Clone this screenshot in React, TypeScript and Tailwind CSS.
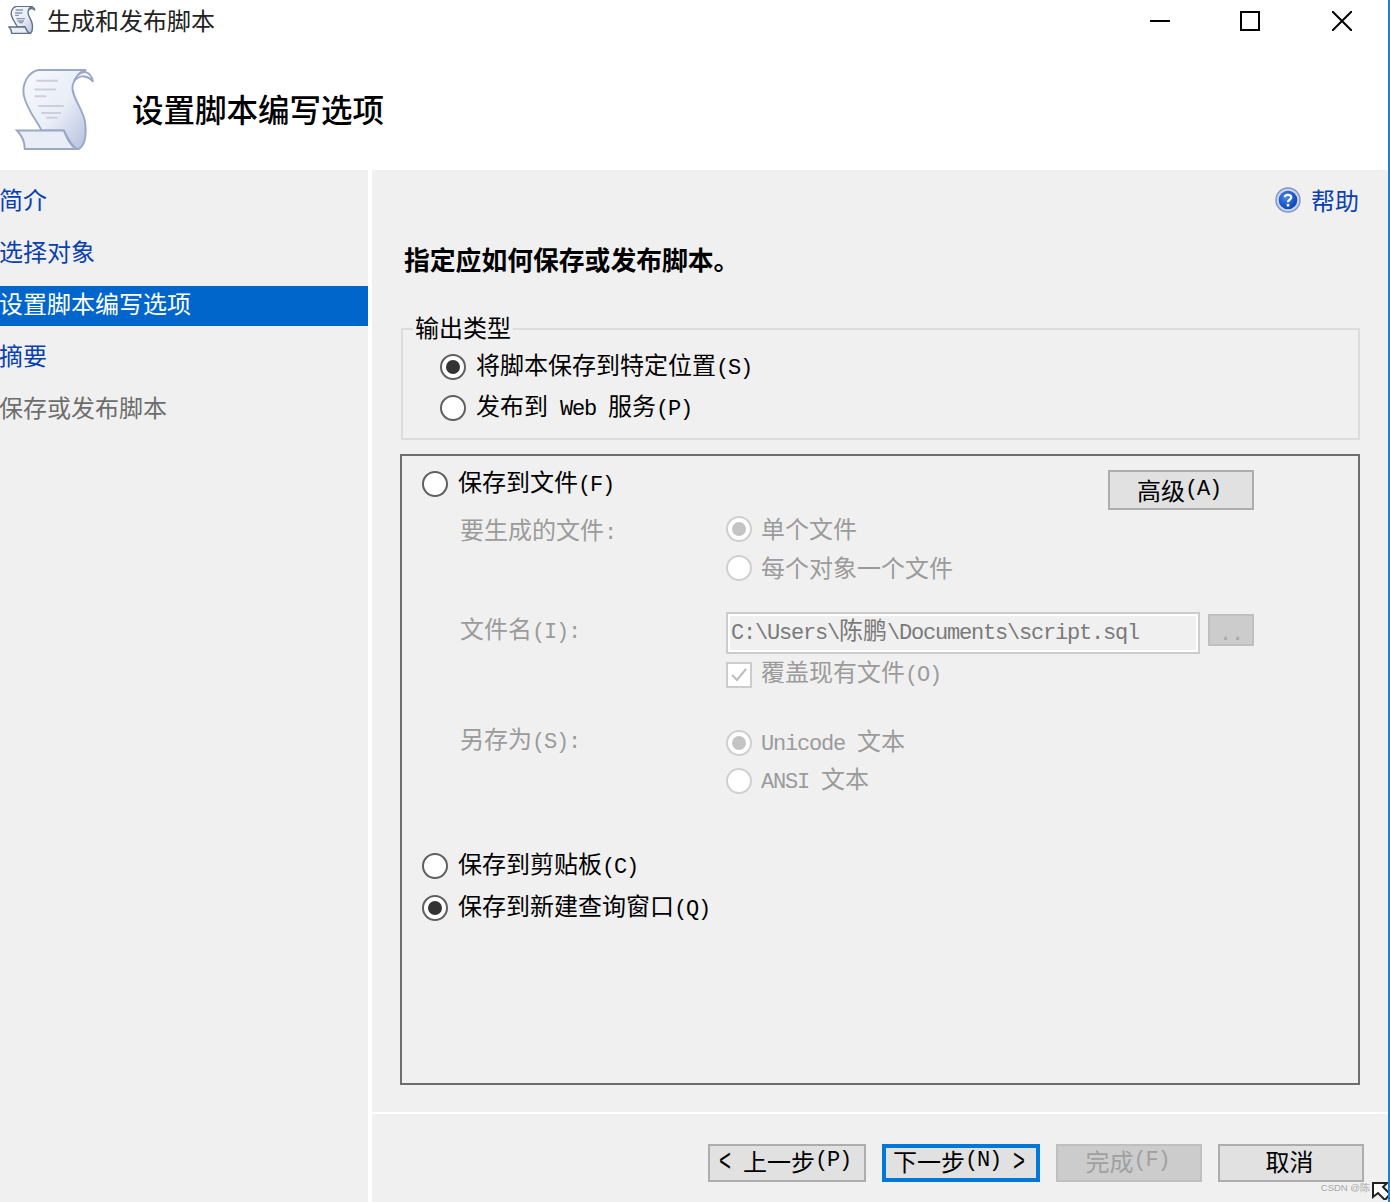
import type { ReactNode } from "react";

const CJK = "font-['Noto_Sans_CJK_SC','Liberation_Sans',sans-serif]";

// half-width latin: squeezed to the 12px cell that the 24px CJK text leaves for it
function M({ children }: { children: ReactNode }) {
  return <span className="font-['Liberation_Mono',monospace] text-[22px] tracking-[-1.2px] whitespace-pre">{children}</span>;
}

// the wizard's < and > are tall and narrow
function Chevron({ children }: { children: ReactNode }) {
  return <span className="relative top-[2px] inline-block w-[12px] scale-y-[1.6] text-center font-['Liberation_Mono',monospace] text-[20px]">{children}</span>;
}

function Radio({ checked, disabled }: { checked?: boolean; disabled?: boolean }) {
  return (
    <span
      className={`flex h-[26px] w-[26px] shrink-0 items-center justify-center rounded-full border-2 ${
        disabled ? "border-[#cfcfcf] bg-white" : "border-[#5f5f5f] bg-white"
      }`}
    >
      {checked && <span className={`h-[14px] w-[14px] rounded-full ${disabled ? "bg-[#c4c4c4]" : "bg-[#333333]"}`} />}
    </span>
  );
}

function Option({ checked, disabled, children, className = "" }: { checked?: boolean; disabled?: boolean; children: ReactNode; className?: string }) {
  return (
    <div className={`flex h-[36px] items-center ${disabled ? "gap-[9px] text-[#9b9b9b]" : "gap-[10px] text-black"} ${className}`}>
      <Radio checked={checked} disabled={disabled} />
      <span className="relative top-[-1px] leading-[36px] whitespace-pre">{children}</span>
    </div>
  );
}

function ScrollIcon({ size, small }: { size: number; small?: boolean }) {
  const line = small ? "#5f6f88" : "#9aa8c6";
  const sw = small ? 4 : 2;
  return (
    <svg width={size} height={size} viewBox="0 0 80 84" fill="none">
      <defs>
        <linearGradient id={`paper${size}`} x1="0" y1="0" x2="1" y2="1">
          <stop offset="0" stopColor="#f7f9fd" />
          <stop offset="0.55" stopColor="#e9edf6" />
          <stop offset="1" stopColor="#b4bfdd" />
        </linearGradient>
      </defs>
      <path d="M62 7 C68 1 76 1 79 13 C74 7 66 5 60 12 Z" fill="#f1f3fa" stroke={line} strokeWidth={sw} />
      <path
        d="M23 1 H72 C66 2 60 8 58 17 C56 28 70 42 71 56 C72 66 72 78 64 82 C60 82 54 74 49 63 H26 C24 56 12 44 8 27 C6 16 12 3 23 1 Z"
        fill={`url(#paper${size})`}
        stroke={line}
        strokeWidth={sw}
      />
      <path d="M1 63 H49 C52 70 55 78 62 82 H9 C9 74 6 68 1 63 Z" fill="#e9edf6" stroke={line} strokeWidth={sw} />
      <path d="M21 12 H43 M19 21 H41 M19 28 H31 M23 38 H49 M26 45 H46 M31 50 H43" stroke={small ? "#8d98ad" : "#c9cfdd"} strokeWidth={small ? 4 : 2} />
    </svg>
  );
}

function HelpIcon() {
  return (
    <svg width="26" height="28" viewBox="0 0 28 28">
      <defs>
        <radialGradient id="help" cx="0.4" cy="0.35" r="0.75">
          <stop offset="0" stopColor="#4f8bea" />
          <stop offset="0.6" stopColor="#1c56c8" />
          <stop offset="1" stopColor="#123f9d" />
        </radialGradient>
      </defs>
      <circle cx="14" cy="14" r="13" fill="#c9d5ee" stroke="#7f95c6" strokeWidth="1.5" />
      <circle cx="14" cy="14" r="10" fill="url(#help)" />
      <path d="M10.5 11 C10.5 8 17.5 7.5 17.5 11 C17.5 14 14 13.5 14 16.5" fill="none" stroke="#ffffff" strokeWidth="2.4" />
      <rect x="12.6" y="18.2" width="2.8" height="2.8" fill="#ffffff" />
    </svg>
  );
}

function Btn({ children, className }: { children: ReactNode; className: string }) {
  return <div className={`flex items-center justify-center whitespace-pre ${className}`}>{children}</div>;
}

const nav = ["简介", "选择对象", "设置脚本编写选项", "摘要"];

export default function App() {
  return (
    <div className={`flex h-[1202px] w-[1390px] flex-col overflow-hidden border-r-2 border-[#1e80d8] bg-white text-[24px] leading-[32px] ${CJK}`}>
      <div className="flex h-[170px] shrink-0 flex-col">
        <div className="flex h-[42px] items-center">
          <div className="ml-[8px] mt-[-2px]">
            <ScrollIcon size={28} small />
          </div>
          <span className="ml-[11px] pb-[2px] text-[#222222]">生成和发布脚本</span>
          <div className="ml-auto mr-[36px] flex items-center">
            <svg width="20" height="20" viewBox="0 0 20 20"><path d="M0 10 H20" stroke="#000" strokeWidth="2" /></svg>
            <svg className="ml-[70px]" width="20" height="20" viewBox="0 0 20 20"><rect x="1" y="1" width="18" height="18" fill="none" stroke="#000" strokeWidth="2" /></svg>
            <svg className="ml-[72px]" width="20" height="20" viewBox="0 0 20 20"><path d="M0 0 L20 20 M20 0 L0 20" stroke="#000" strokeWidth="2" /></svg>
          </div>
        </div>
        <div className="flex flex-1 items-start">
          <div className="ml-[14px] mt-[27px]">
            <ScrollIcon size={82} />
          </div>
          <h1 className="ml-[36px] mt-[48px] text-[31.5px] font-medium leading-[36px] text-black">设置脚本编写选项</h1>
        </div>
      </div>

      <div className="flex min-h-0 flex-1 gap-[4px]">
        <aside className="w-[368px] shrink-0 bg-[#f0f0f0] pt-[12px]">
          <div className="flex flex-col gap-[12px] indent-[-1px]">
            {nav.map((n) => (
              <div key={n} className={`h-[40px] leading-[34px] ${n === "设置脚本编写选项" ? "bg-[#0066cc] text-white" : "text-[#0a3fb0]"}`}>
                {n}
              </div>
            ))}
            <div className="h-[40px] leading-[34px] text-[#6d6d6d]">保存或发布脚本</div>
          </div>
        </aside>

        <main className="flex min-w-0 flex-1 flex-col bg-[#f0f0f0]">
          <div className="flex h-[46px] items-end justify-end pr-[29px]">
            <div className="flex items-center gap-[10px] text-[#0a3fb0]">
              <HelpIcon />
              <span>帮助</span>
            </div>
          </div>
          <h2 className="ml-[32px] mt-[25px] text-[25.8px] font-bold leading-[36px] text-black">指定应如何保存或发布脚本。</h2>

          <div className="relative ml-[29px] mr-[28px] mt-[51px] h-[112px] border-2 border-[#dcdcdc] pl-[37px] pt-[19px]">
            <span className="absolute left-[10px] top-[-19px] bg-[#f0f0f0] px-[2px] leading-[32px] text-black">输出类型</span>
            <Option checked>将脚本保存到特定位置<M>(S)</M></Option>
            <Option className="mt-[5px]">发布到<M> Web </M>服务<M>(P)</M></Option>
          </div>

          <div className="ml-[28px] mr-[28px] mt-[14px] h-[631px] border-2 border-[#6d6d6d] pl-[20px] pt-[10px]">
            <div className="flex items-start justify-between pr-[104px]">
              <Option>保存到文件<M>(F)</M></Option>
              <Btn className="mt-[4px] h-[40px] w-[146px] border-2 border-[#adadad] bg-[#e1e1e1] pr-[4px] text-black">高级<M>(A)</M></Btn>
            </div>

            <div className="ml-[38px] mt-[-1px] grid grid-cols-[266px_1fr] text-[#9b9b9b]">
              <div className="pt-[4px]">要生成的文件<M>:</M></div>
              <div className="pt-[2px]">
                <Option checked disabled>单个文件</Option>
                <Option disabled className="mt-[3px]">每个对象一个文件</Option>
              </div>

              <div className="pt-[26px]">文件名<M>(I):</M></div>
              <div className="pt-[26px]">
                <div className="flex items-start gap-[8px] pr-[104px]">
                  <div className="flex h-[42px] w-[474px] items-center border-2 border-[#cccccc] px-[3px] pb-[4px] text-[#7a7a7a] outline-2 outline-offset-[-4px] outline-white">
                    <span className="leading-[32px] whitespace-pre"><M>C:\Users\</M>陈鹏<M>\Documents\script.sql</M></span>
                  </div>
                  <div className="mt-[2px] flex h-[32px] w-[46px] items-end justify-center border-2 border-[#bfbfbf] bg-[#cccccc] leading-[18px] text-[#a8a8a8]">
                    <M>..</M>
                  </div>
                </div>
                <div className="mt-[2px] flex items-center gap-[9px]">
                  <span className="flex h-[26px] w-[26px] items-center justify-center border-2 border-[#cccccc] bg-white">
                    <svg width="18" height="18" viewBox="0 0 18 18"><path d="M2 9 L7 14 L16 3" fill="none" stroke="#bdbdbd" strokeWidth="2" /></svg>
                  </span>
                  <span className="relative top-[-1px]">覆盖现有文件<M>(O)</M></span>
                </div>
              </div>

              <div className="pt-[29px]">另存为<M>(S):</M></div>
              <div className="pt-[32px]">
                <Option checked disabled><M>Unicode </M>文本</Option>
                <Option disabled className="mt-[2px]"><M>ANSI </M>文本</Option>
              </div>
            </div>

            <Option className="mt-[49px]">保存到剪贴板<M>(C)</M></Option>
            <Option checked className="mt-[6px]">保存到新建查询窗口<M>(Q)</M></Option>
          </div>

          <div className="mt-[27px] h-[2px] bg-white" />

          <div className="relative mt-[30px] flex justify-end gap-[16px] pr-[24px]">
            <Btn className="h-[38px] w-[158px] border-2 border-[#adadad] bg-[#e1e1e1] pr-[4px] pb-[4px] text-black"><Chevron>&lt;</Chevron><M> </M>上一步<M>(P)</M></Btn>
            <Btn className="h-[38px] w-[158px] border-4 border-[#0078d7] bg-[#e1e1e1] pr-[4px] pb-[4px] text-black">下一步<M>(N) </M><Chevron>&gt;</Chevron></Btn>
            <Btn className="h-[38px] w-[146px] border-2 border-[#bfbfbf] bg-[#cccccc] pr-[3px] pb-[4px] text-[#a0a0a0]">完成<M>(F)</M></Btn>
            <Btn className="h-[38px] w-[146px] border-2 border-[#adadad] bg-[#e1e1e1] pr-[3px] pb-[4px] text-black">取消</Btn>
            <span className="absolute right-[18px] top-[37px] font-['Liberation_Sans',sans-serif] text-[9.5px] leading-[14px] text-[#a8a8a8]">CSDN @陈</span>
            <svg className="absolute right-[-2px] top-[38px]" width="18" height="18" viewBox="0 0 18 18">
              <path d="M1 1 H15 L11 5 L18 12 L13 18 L6 11 L1 15 Z" fill="#ffffff" stroke="#222222" strokeWidth="2" />
            </svg>
          </div>
        </main>
      </div>
    </div>
  );
}
